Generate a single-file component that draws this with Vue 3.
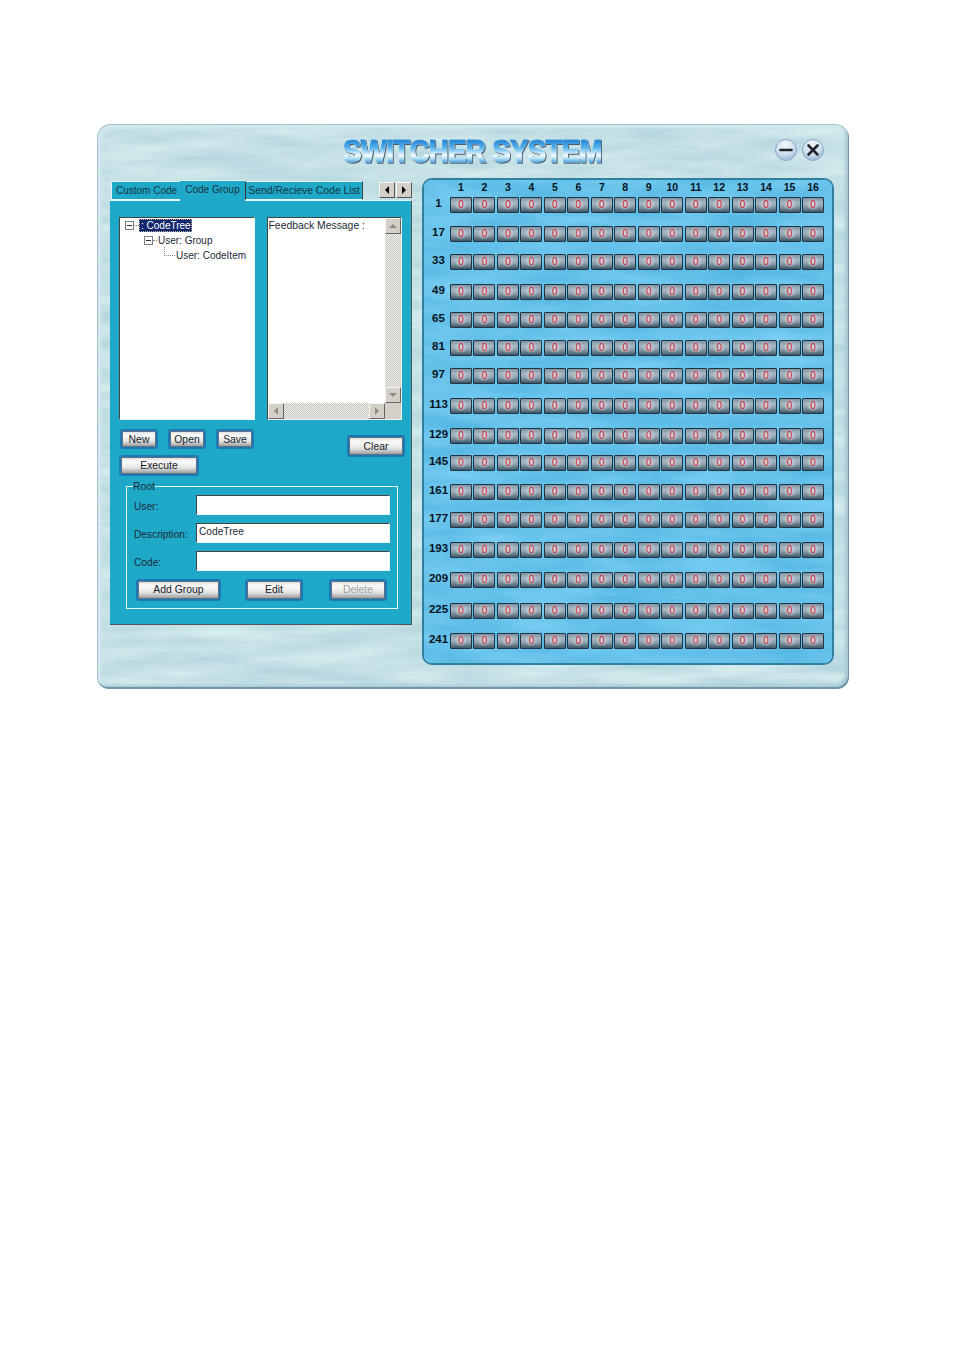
<script setup>
const columns = Array.from({ length: 16 }, (_, i) => i + 1)
const rowGaps = [0, 13, 12, 14, 12, 12, 12, 14, 14, 11, 13, 12, 14, 14, 15, 14]
const rows = rowGaps.map((gap, i) => ({ label: i * 16 + 1, gap }))
const fields = [
  { label: 'User:', value: '' },
  { label: 'Description:', value: 'CodeTree' },
  { label: 'Code:', value: '' }
]
</script>

<template>
  <div class="page">
    <div class="window">
      <svg class="texture" width="100%" height="100%" aria-hidden="true">
        <filter id="water" x="0" y="0" width="100%" height="100%" color-interpolation-filters="sRGB">
          <feTurbulence type="fractalNoise" baseFrequency="0.01 0.07" numOctaves="4" seed="7" />
          <feColorMatrix values="0.2 0 0 0 0.67  0.14 0 0 0 0.81  0.1 0 0 0 0.85  0 0 0 0 1" />
        </filter>
        <rect width="100%" height="100%" filter="url(#water)" />
      </svg>

      <header class="titlebar">
        <h1 class="title">SWITCHER SYSTEM</h1>
        <div class="win-buttons">
          <button class="round">
            <svg width="14" height="14" viewBox="0 0 14 14"><path d="M1.5 7h11" stroke="#20242c" stroke-width="2.6" stroke-linecap="round" /></svg>
          </button>
          <button class="round">
            <svg width="14" height="14" viewBox="0 0 14 14"><path d="M2.5 2.5l9 9M11.5 2.5l-9 9" stroke="#20242c" stroke-width="2.6" stroke-linecap="round" /></svg>
          </button>
        </div>
      </header>

      <div class="content">
        <section class="left">
          <div class="tabs">
            <div class="tab first">Custom Code</div>
            <div class="tab active">Code Group</div>
            <div class="tab third">Send/Recieve Code List</div>
            <div class="arrows">
              <span class="arrow"><i class="tri-left"></i></span>
              <span class="arrow"><i class="tri-right"></i></span>
            </div>
          </div>

          <div class="body">
            <div class="panes">
              <div class="pane tree">
                <div class="node n0">
                  <span class="box"></span><span class="dots"></span><span class="selected">: CodeTree</span>
                </div>
                <div class="node n1">
                  <span class="box"></span><span class="dots short"></span><span>User: Group</span>
                </div>
                <div class="node n2">
                  <span class="elbow"></span><span>User: CodeItem</span>
                </div>
              </div>

              <div class="pane feedback">
                <div class="fb-main">
                  <div class="fb-text">Feedback Message :</div>
                  <div class="scroll-h">
                    <span class="sb-btn"><i class="tri-left small"></i></span>
                    <span class="track"></span>
                    <span class="sb-btn"><i class="tri-right small"></i></span>
                  </div>
                </div>
                <div class="fb-side">
                  <div class="scroll-v">
                    <span class="sb-btn"><i class="tri-up small"></i></span>
                    <span class="track"></span>
                    <span class="sb-btn"><i class="tri-down small"></i></span>
                  </div>
                  <div class="corner"></div>
                </div>
              </div>
            </div>

            <div class="actions">
              <div class="actions-left">
                <div class="trio">
                  <button class="btn new">New</button>
                  <button class="btn open">Open</button>
                  <button class="btn save">Save</button>
                </div>
                <button class="btn execute">Execute</button>
              </div>
              <button class="btn clear">Clear</button>
            </div>

            <fieldset class="root">
              <legend>Root</legend>
              <div v-for="f in fields" :key="f.label" class="field">
                <label>{{ f.label }}</label>
                <div class="input">{{ f.value }}</div>
              </div>
              <div class="root-buttons">
                <button class="btn add">Add Group</button>
                <button class="btn edit">Edit</button>
                <button class="btn del">Delete</button>
              </div>
            </fieldset>
          </div>
        </section>

        <section class="matrix">
          <svg class="texture" width="100%" height="100%" aria-hidden="true">
            <filter id="water2" x="0" y="0" width="100%" height="100%" color-interpolation-filters="sRGB">
              <feTurbulence type="fractalNoise" baseFrequency="0.012 0.06" numOctaves="3" seed="3" />
              <feColorMatrix values="0.2 0 0 0 0.3  0.12 0 0 0 0.7  0.08 0 0 0 0.88  0 0 0 0 1" />
            </filter>
            <rect width="100%" height="100%" filter="url(#water2)" />
          </svg>
          <div class="row head">
            <span class="row-label"></span>
            <span v-for="c in columns" :key="c" class="col-label">{{ c }}</span>
          </div>
          <div v-for="r in rows" :key="r.label" class="row" :style="{ marginTop: r.gap + 'px' }">
            <span class="row-label">{{ r.label }}</span>
            <span v-for="c in columns" :key="c" class="cell"><b>0</b></span>
          </div>
        </section>
      </div>
    </div>
  </div>
</template>

<style>
html, body { margin: 0; background: #fff; }
</style>

<style scoped>
.page {
  width: 954px;
  height: 1350px;
  padding: 124px 0 0 97px;
  box-sizing: border-box;
  font-family: "Liberation Sans", Arial, sans-serif;
  font-size: 11px;
  color: #111;
}
.window {
  position: relative;
  width: 752px;
  height: 565px;
  box-sizing: border-box;
  border-radius: 14px 14px 12px 12px;
  overflow: hidden;
  padding: 0 14px 0 13px;
}
.window::after {
  content: "";
  position: absolute;
  inset: 0;
  z-index: 2;
  pointer-events: none;
  border-radius: inherit;
  box-shadow:
    inset -1px -2px 0 #6f96a6,
    inset 0 0 0 1px #a3c2cd,
    inset 3px 3px 3px 1px #d3e9ef,
    inset -3px -3px 3px 1px #a9c9d3;
}
.texture { position: absolute; inset: 0; z-index: 0; }
.titlebar, .content { position: relative; z-index: 1; }

.titlebar {
  height: 54px;
  display: flex;
  align-items: flex-start;
  justify-content: flex-end;
  position: relative;
}
.title {
  position: absolute;
  left: 233px;
  top: 11px;
  margin: 0;
  font-size: 31px;
  line-height: 34px;
  font-weight: 700;
  font-family: "Liberation Sans", Arial, sans-serif;
  letter-spacing: -0.6px;
  white-space: nowrap;
  transform: scaleX(0.885);
  transform-origin: left center;
  background: linear-gradient(#2a8ad6 18%, #58b4ee 38%, #f6fcff 60%, #a8dcf6 70%, #2a8ad6 84%);
  -webkit-background-clip: text;
  background-clip: text;
  color: transparent;
  -webkit-text-stroke: 1.2px transparent;
  filter: drop-shadow(0 0 0.6px #eef9fe) drop-shadow(1px 1px 0 #47596c);
}
.win-buttons { display: flex; gap: 5px; margin: 15px 11px 0 0; }
.round {
  width: 22px;
  height: 22px;
  padding: 0;
  border: 1px solid #8fa9c4;
  border-radius: 50%;
  background: radial-gradient(circle at 45% 25%, #f4f8fc 0%, #cfdeee 50%, #7fa3cc 100%);
  display: flex;
  align-items: center;
  justify-content: center;
}

.content { display: flex; align-items: flex-start; gap: 10px; }

/* left panel */
.left { width: 302px; margin-top: 2px; }
.tabs { display: flex; height: 20px; align-items: flex-end; position: relative; z-index: 1; }
.tab {
  box-sizing: border-box;
  height: 19px;
  line-height: 18px;
  text-align: center;
  background: #1fa9c9;
  white-space: nowrap;
  font-size: 10.4px;
  color: #15333f;
}
.tab.first {
  width: 69px;
  margin-left: 1px;
  font-size: 10px;
  padding-left: 1px;
  border: 1px solid #e6f4f8;
  border-right: 0;
  border-radius: 2px 0 0 0;
}
.tab.active {
  width: 65px;
  height: 21px;
  line-height: 17px;
  margin-bottom: -1px;
  font-size: 10px;
  border-top: 1px solid #e6f4f8;
  position: relative;
}
.tab.third {
  width: 118px;
  border: 1px solid #e6f4f8;
  border-right: 1px solid #444;
  border-left: 1px solid #333;
}
.arrows { display: flex; gap: 1px; margin-left: 16px; align-self: flex-start; margin-top: 2px; }
.arrow {
  box-sizing: border-box;
  width: 16px;
  height: 16px;
  background: #d4d0c8;
  border: 1px solid;
  border-color: #f5f5f2 #555 #555 #f5f5f2;
  display: flex;
  align-items: center;
  justify-content: center;
}
i { display: block; width: 0; height: 0; border-style: solid; border-color: transparent; }
.tri-left { border-width: 4px 4px 4px 0; border-right-color: #000; }
.tri-right { border-width: 4px 0 4px 4px; border-left-color: #000; }
.tri-left.small { border-right-color: #8a8a86; }
.tri-right.small { border-left-color: #8a8a86; }
.tri-up.small { border-width: 0 4px 4px; border-bottom-color: #8a8a86; }
.tri-down.small { border-width: 4px 4px 0; border-top-color: #8a8a86; }

.body {
  box-sizing: border-box;
  height: 425px;
  background: #1fa9c9;
  border-top: 1px solid #e6f4f8;
  border-right: 1px solid #555;
  border-bottom: 1px solid #555;
  padding: 16px 9px 0 9px;
}
.panes { display: flex; gap: 12px; }
.pane {
  box-sizing: border-box;
  height: 203px;
  width: 136px;
  background: #fff;
  border: 1px solid;
  border-color: #444 #e8f4f7 #e8f4f7 #444;
}
.tree { padding-top: 0; }
.node { display: flex; align-items: center; height: 15px; font-size: 10px; color: #1c2a36; white-space: nowrap; }
.node.n1 { padding-left: 24px; }
.node.n2 { padding-left: 44px; }
.node.n0 { padding-left: 5px; }
.box {
  box-sizing: border-box;
  width: 9px;
  height: 9px;
  border: 1px solid #7f7f7f;
  flex: none;
  background: linear-gradient(#333, #333) center / 5px 1px no-repeat;
}
.dots { width: 5px; border-top: 1px dotted #888; flex: none; }
.dots.short { width: 4px; margin-right: 1px; }
.elbow {
  width: 11px;
  height: 9px;
  margin-top: -8px;
  margin-right: 1px;
  border-left: 1px dotted #888;
  border-bottom: 1px dotted #888;
  box-sizing: border-box;
  flex: none;
}
.selected {
  background: #12276e;
  color: #fff;
  padding: 0 1px 0 2px;
  line-height: 13px;
  outline: 1px dotted #c8b48a;
  outline-offset: -1px;
}
.feedback { display: flex; }
.fb-main { flex: 1; display: flex; flex-direction: column; min-width: 0; }
.fb-text { flex: 1; padding: 1px 0 0 1px; font-size: 10.4px; line-height: 14px; color: #1c2a36; }
.fb-side { width: 16px; display: flex; flex-direction: column; }
.scroll-v { flex: 1; display: flex; flex-direction: column; }
.scroll-h { display: flex; height: 16px; }
.sb-btn {
  box-sizing: border-box;
  width: 16px;
  height: 16px;
  flex: none;
  background: #d4d0c8;
  border: 1px solid;
  border-color: #f5f5f2 #666 #666 #f5f5f2;
  display: flex;
  align-items: center;
  justify-content: center;
}
.track {
  flex: 1;
  background: repeating-conic-gradient(#c4c1ba 0 25%, #f4f4f1 0 50%) 0 0 / 2px 2px;
}
.corner { height: 16px; background: #d4d0c8; }

.actions { display: flex; justify-content: space-between; align-items: flex-start; margin-top: 9px; }
.actions-left { display: flex; flex-direction: column; gap: 6px; }
.trio { display: flex; }
.btn {
  box-sizing: border-box;
  padding: 0;
  height: 20px;
  font-family: "Liberation Sans", Arial, sans-serif;
  font-size: 10.4px;
  line-height: 17px;
  color: #15202a;
  background: linear-gradient(#d8dadb 0%, #fbfbfa 28%, #e6e6e4 62%, #8f9396 100%);
  border: 2px solid #1c78b6;
  border-radius: 3px;
  box-shadow: inset 0 0 0 1px #60707c;
}
.new { width: 38px; margin-left: 1px; }
.open { width: 38px; margin-left: 10px; }
.save { width: 38px; margin-left: 10px; }
.execute { width: 80px; height: 21px; line-height: 18px; }
.clear { width: 58px; height: 22px; line-height: 19px; margin: 6px -3px 0 0; }

.root {
  box-sizing: border-box;
  width: 272px;
  height: 128px;
  margin: 5px 0 0 7px;
  padding: 0 6px 0 7px;
  border: 1px solid #eef8fb;
  position: relative;
}
legend {
  padding: 0;
  margin-left: -1px;
  font-size: 10.4px;
  line-height: 11px;
  color: #1c2a36;
}
.field { display: flex; align-items: center; height: 20px; margin-bottom: 8px; }
.field:first-of-type { margin-top: 3px; }
.field label { width: 62px; flex: none; font-size: 10.2px; color: #1c2a36; padding-top: 3px; }
.input {
  box-sizing: border-box;
  width: 194px;
  height: 20px;
  background: #fff;
  border: 1px solid;
  border-color: #444 #e8f4f7 #e8f4f7 #444;
  padding-left: 2px;
  font-size: 10.2px;
  line-height: 16px;
  color: #1c2a36;
}
.root-buttons { display: flex; padding-left: 2px; }
.add, .edit, .del { height: 22px; line-height: 18px; }
.add { width: 85px; }
.edit { width: 58px; margin-left: 24px; }
.del { width: 58px; margin-left: 26px; color: #9aa3a8; }

/* matrix */
.matrix {
  position: relative;
  box-sizing: border-box;
  width: 412px;
  height: 487px;
  overflow: hidden;
  border-radius: 10px;
  border: 2px solid #2f7f9f;
  padding: 2px 0 0 0;
}
.row { position: relative; display: flex; align-items: center; height: 16px; gap: 1.47px; }
.row.head { height: 10px; margin-bottom: 4.5px; }
.row-label {
  width: 23px;
  margin-left: 3px;
  margin-right: -1.47px;
  margin-bottom: 3px;
  text-align: center;
  font-weight: 700;
  font-size: 11.5px;
  color: #06121c;
  flex: none;
}
.col-label {
  width: 22px;
  text-align: center;
  font-weight: 700;
  font-size: 10.5px;
  line-height: 10px;
  color: #06121c;
  flex: none;
}
.cell {
  box-sizing: border-box;
  width: 22px;
  height: 16px;
  flex: none;
  border: 1px solid #1f3444;
  border-radius: 1px;
  background:
    radial-gradient(ellipse 7px 6px at 50% 45%, #d6d3da 0%, rgba(190, 200, 208, 0.75) 55%, rgba(160, 175, 186, 0) 100%),
    linear-gradient(#7d93a2 0%, #a6b6c1 35%, #8c9fac 60%, #3d5768 100%);
  display: flex;
  align-items: center;
  justify-content: center;
}
.cell b { font-weight: 400; font-size: 10px; line-height: 12px; color: #d0182c; }
</style>
